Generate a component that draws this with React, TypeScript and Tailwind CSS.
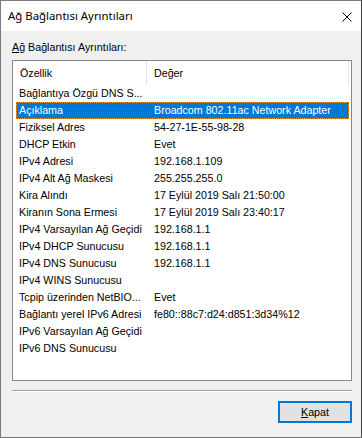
import React from "react";

const rows: [string, string][] = [
  ["Bağlantıya Özgü DNS S...", ""],
  ["Açıklama", "Broadcom 802.11ac Network Adapter"],
  ["Fiziksel Adres", "54-27-1E-55-98-28"],
  ["DHCP Etkin", "Evet"],
  ["IPv4 Adresi", "192.168.1.109"],
  ["IPv4 Alt Ağ Maskesi", "255.255.255.0"],
  ["Kira Alındı", "17 Eylül 2019 Salı 21:50:00"],
  ["Kiranın Sona Ermesi", "17 Eylül 2019 Salı 23:40:17"],
  ["IPv4 Varsayılan Ağ Geçidi", "192.168.1.1"],
  ["IPv4 DHCP Sunucusu", "192.168.1.1"],
  ["IPv4 DNS Sunucusu", "192.168.1.1"],
  ["IPv4 WINS Sunucusu", ""],
  ["Tcpip üzerinden NetBIO...", "Evet"],
  ["Bağlantı yerel IPv6 Adresi", "fe80::88c7:d24:d851:3d34%12"],
  ["IPv6 Varsayılan Ağ Geçidi", ""],
  ["IPv6 DNS Sunucusu", ""],
];

export default function App() {
  const font = { fontFamily: '"Liberation Sans", Arial, sans-serif' };
  return (
    <div
      className="w-[362px] h-[438px] border border-[#7a7a7a] border-r-[#444] bg-[#f0f0f0] flex flex-col overflow-hidden text-black"
      style={font}
    >
      {/* Title bar */}
      <div className="h-[30px] bg-white flex items-center justify-between pl-[7px] pr-[9px] shrink-0">
        <span
          className="text-[11.4px] leading-none"
          style={{ fontFamily: '"Noto Sans", "Open Sans", sans-serif' }}
        >
          Ağ Bağlantısı Ayrıntıları
        </span>
        <svg width="10" height="10" viewBox="0 0 10 10" className="mt-[1px]">
          <path d="M0.5 0.5 L9.5 9.5 M9.5 0.5 L0.5 9.5" stroke="#000" strokeWidth="1" fill="none" />
        </svg>
      </div>

      {/* Body */}
      <div className="flex flex-col pl-[11px] pr-[9px]">
        <div className="mt-[10px] h-[13px] text-[10.7px] leading-[13px]">
          <span className="underline underline-offset-[1px]">A</span>ğ Bağlantısı Ayrıntıları:
        </div>

        <div className="mt-[6px] h-[321px] border border-[#828790] bg-white flex flex-col">
          {/* Header */}
          <div className="h-[24px] flex text-[10.7px] shrink-0">
            <div className="w-[134px] border-r border-[#e5e5e5] flex items-center pl-[7px]">
              Özellik
            </div>
            <div className="w-[202px] border-r border-[#e5e5e5] flex items-center pl-[7px]">
              Değer
            </div>
          </div>
          {/* Rows */}
          <div className="flex flex-col pl-[3px]">
            {rows.map(([k, v], i) => {
              const sel = i === 1;
              return (
                <div
                  key={i}
                  className={
                    sel
                      ? "h-[17px] w-[333px] flex items-center text-[10.7px] whitespace-nowrap bg-[#0078d7] text-white border border-dotted border-[#ff9a2e]"
                      : "h-[17px] w-[333px] flex items-center text-[10.7px] whitespace-nowrap border border-transparent"
                  }
                >
                  <div className="w-[137px] pl-[2px] overflow-hidden">{k}</div>
                  <div className="flex-1">{v}</div>
                </div>
              );
            })}
          </div>
        </div>

        <div className="mt-[9px] h-[1px] bg-[#a0a0a0]" />
        <div className="h-[1px] bg-white" />

        <div className="mt-[9px] flex justify-end">
          <button className="w-[74px] h-[22px] border-2 border-[#0078d7] bg-[#e1e1e1] text-[10.7px] flex items-center justify-center">
            <span>
              <span className="underline underline-offset-[1px]">K</span>apat
            </span>
          </button>
        </div>
      </div>
    </div>
  );
}
